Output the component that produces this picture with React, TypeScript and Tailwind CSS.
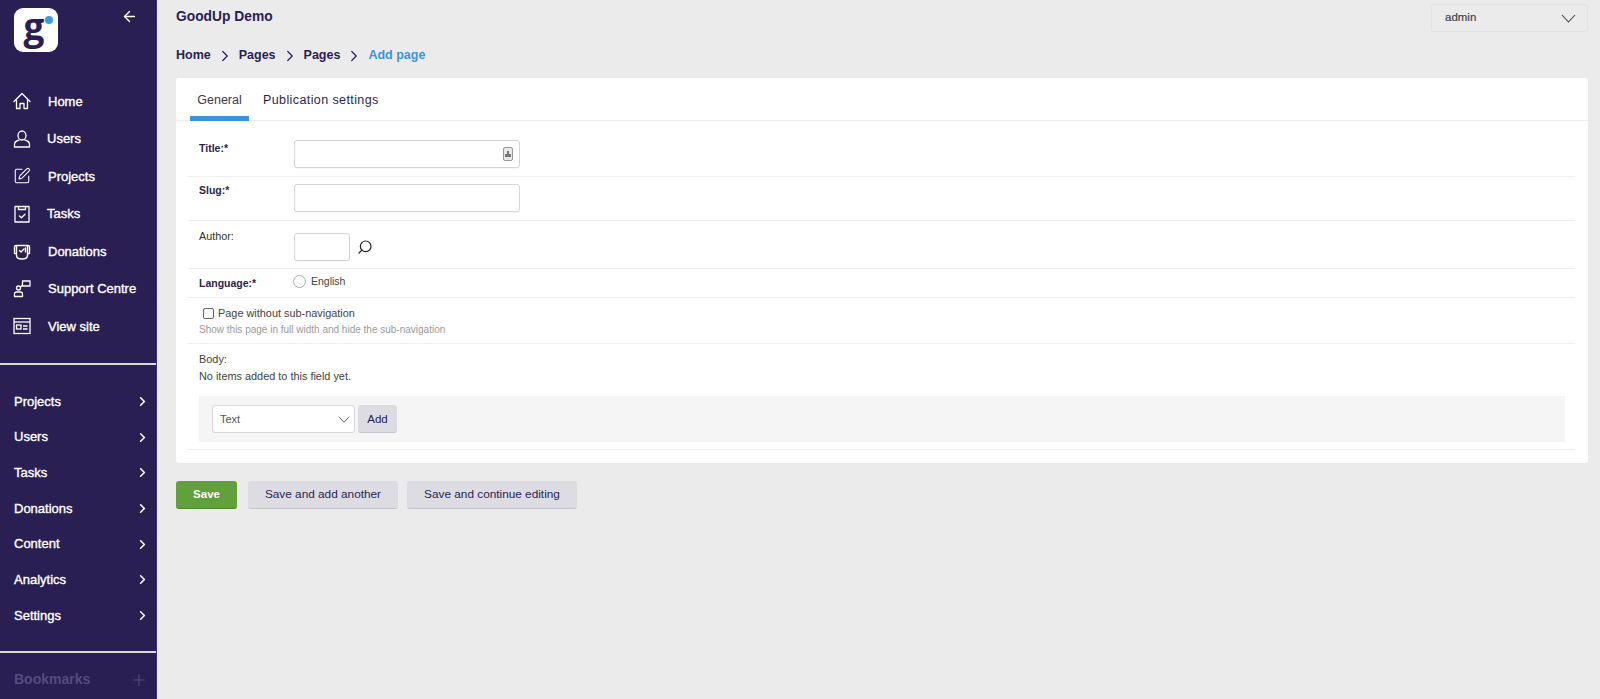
import React from 'react';
import { ArrowLeft, ChevronRight, Plus, Search, SquarePen } from 'lucide-react';

const WideChevron = ({ className }: { className?: string }) => (
  <svg width="15" height="9" viewBox="0 0 15 9" fill="none" stroke="currentColor" strokeWidth="1.1" className={className}>
    <path d="M1 1l6.500 7L14 1" />
  </svg>
);

const HomeIcon = () => (
  <svg width="18" height="18" viewBox="0 0 18 18" fill="none" stroke="currentColor" strokeWidth="1.3" strokeLinejoin="round" strokeLinecap="round">
    <path d="M1 9.500L9 1.500l8 8" />
    <path d="M3.500 8v8.500h3.500v-5h4v5h3.500V8" />
  </svg>
);

const UserIcon = () => (
  <svg width="18" height="18" viewBox="0 0 18 18" fill="none" stroke="currentColor" strokeWidth="1.3" strokeLinejoin="round">
    <ellipse cx="9" cy="5.500" rx="4" ry="4.500" />
    <path d="M6.500 10q-5 1-5 4.500v2.500h15v-2.500q0-3.500-5-4.500" />
  </svg>
);

const TasksIcon = () => (
  <svg width="18" height="18" viewBox="0 0 18 18" fill="none" stroke="currentColor" strokeWidth="1.3" strokeLinejoin="round" strokeLinecap="round">
    <rect x="2" y="1.500" width="14" height="15.500" />
    <path d="M5.500 1.500v3h7v-3" />
    <path d="M6.500 11l2 1.800 3.500-3.500" />
  </svg>
);

const DonationsIcon = () => (
  <svg width="18" height="18" viewBox="0 0 18 18" fill="none" stroke="currentColor" strokeWidth="1.4" strokeLinejoin="round" strokeLinecap="round">
    <path d="M3.500 11.500H1.500V5q0-1.500 1.500-1.500h12q1.500 0 1.500 1.500v6.500h-1.500" />
    <path d="M3.500 4v9.500q0 3.500 5.500 3.500t5.500-3.500V4" />
    <path d="M6.500 8.500l1.500 1.500 3-3" />
    <path d="M12.500 6v4" />
  </svg>
);

const SupportIcon = () => (
  <svg width="18" height="18" viewBox="0 0 18 18" fill="none" stroke="currentColor" strokeWidth="1.3" strokeLinejoin="round">
    <rect x="9.500" y="1" width="7.500" height="5" />
    <circle cx="5.500" cy="8" r="2" />
    <path d="M1.500 16.500v-2.500q0-2 2-2h4q2 0 2 2v2.500z" />
    <path d="M7.500 7l2-2" />
  </svg>
);

const ViewSiteIcon = () => (
  <svg width="18" height="18" viewBox="0 0 18 18" fill="none" stroke="currentColor" strokeWidth="1.3">
    <rect x="1" y="1.500" width="16" height="15" />
    <path d="M1 5h16" />
    <rect x="3.500" y="8" width="4.500" height="4" />
    <path d="M10 9h4.500M10 12h4.500" />
  </svg>
);

const primaryNav = [
  { label: 'Home', icon: <HomeIcon />, pad: 'pl-[48px]' },
  { label: 'Users', icon: <UserIcon />, pad: 'pl-[47px]' },
  { label: 'Projects', icon: <SquarePen size={18} strokeWidth={1.4} />, pad: 'pl-[48px]' },
  { label: 'Tasks', icon: <TasksIcon />, pad: 'pl-[47px]' },
  { label: 'Donations', icon: <DonationsIcon />, pad: 'pl-[48px]' },
  { label: 'Support Centre', icon: <SupportIcon />, pad: 'pl-[48px]' },
  { label: 'View site', icon: <ViewSiteIcon />, pad: 'pl-[48px]' },
];

const secondaryNav = ['Projects', 'Users', 'Tasks', 'Donations', 'Content', 'Analytics', 'Settings'];

function Sidebar() {
  return (
    <aside className="w-[157px] h-[699px] shrink-0 bg-[#291f52] text-white flex flex-col overflow-hidden border-r border-[#3a3170]">
      <div className="h-[82px] pt-2 pl-[14px] pr-[18px] flex items-start justify-between">
        <div className="relative w-[44px] h-[44px] rounded-[9px] bg-white flex items-center justify-center">
          <span className="font-['Open_Sans'] text-[37px] leading-none font-bold text-[#291f52] -mt-[9px] -ml-[4px]">g</span>
          <span className="absolute top-[8px] right-[5px] w-[8px] h-[8px] rounded-full bg-[#3d9be0]" />
        </div>
        <ArrowLeft size={17} strokeWidth={2} />
      </div>
      <nav className="flex flex-col">
        {primaryNav.map((item) => (
          <div key={item.label} className="relative h-[37.5px] flex items-center">
            <span className="absolute left-[13px] top-[10px]">{item.icon}</span>
            <span className={`${item.pad} pt-[1px] text-[13px] font-medium [-webkit-text-stroke:0.35px_white]`}>{item.label}</span>
          </div>
        ))}
      </nav>
      <div className="mt-[18px] h-[2px] shrink-0 bg-[#d8d8de]" />
      <nav className="pt-[19px] flex flex-col">
        {secondaryNav.map((label) => (
          <div key={label} className="h-[35.7px] pl-[14px] pr-[6px] flex items-center justify-between">
            <span className="text-[13px] font-medium [-webkit-text-stroke:0.35px_white]">{label}</span>
            <ChevronRight size={15} strokeWidth={2.6} />
          </div>
        ))}
      </nav>
      <div className="mt-[18px] h-[2px] shrink-0 bg-[#d8d8de]" />
      <div className="pt-[16px] pl-[14px] pr-[8px] flex items-center justify-between text-[#554c7c]">
        <span className="text-[14px] font-bold">Bookmarks</span>
        <Plus size={18} strokeWidth={1.6} />
      </div>
    </aside>
  );
}

function Row({ label, required, className, labelClass, children }: { label: string; required?: boolean; className: string; labelClass?: string; children: React.ReactNode }) {
  return (
    <div className={`flex border-b border-[#efefef] ml-[12px] mr-[13px] pl-[11px] ${className}`}>
      <label className={`w-[95px] shrink-0 leading-[14px] ${required ? 'text-[10.5px] font-bold' : 'text-[10.8px] text-[#333]'} ${labelClass ?? ''}`}>{label}</label>
      {children}
    </div>
  );
}

const inputClass = 'h-[28px] rounded-[3px] border border-[#d4d4d4] bg-white shadow-[0_1px_1px_rgba(0,0,0,0.04)]';

function PageForm() {
  return (
    <div className="bg-white rounded-[3px] h-[385px] text-[#291f52]">
      <div className="h-[43px] border-b border-[#ececec] pl-[14px] flex text-[12.5px]">
        <div className="w-[59px] h-[43px] flex justify-center pt-[13px] border-b-[5px] border-[#3a93de] text-[#3a3a4a]">General</div>
        <div className="pl-[14px] pt-[13px] tracking-[0.4px]">Publication settings</div>
      </div>
      <Row label="Title:*" required className="h-[56px] pt-[20px]">
        <div className={`relative w-[226px] ${inputClass} -mt-[1px]`}>
          <span className="absolute right-[6px] top-[6px] w-[10px] h-[14px] rounded-[2px] border-[1.5px] border-[#999] bg-[#e8e8e8] flex flex-col items-center justify-center">
            <span className="w-[2px] h-[3px] bg-[#777]" />
            <span className="w-[6px] h-[3px] bg-[#777]" />
          </span>
        </div>
      </Row>
      <Row label="Slug:*" required labelClass="mt-[6px]" className="h-[44px] items-start">
        <div className="pt-[7px]"><div className={`w-[226px] ${inputClass}`} /></div>
      </Row>
      <Row label="Author:" labelClass="-mt-[1px]" className="h-[48px] pt-[9px]">
        <div className={`w-[56px] ${inputClass} mt-[3px]`} />
        <Search size={16} strokeWidth={1.8} className="mt-[9px] ml-[7px] text-[#222] -scale-x-100" />
      </Row>
      <Row label="Language:*" required className="h-[29px] items-center">
        <div className="-ml-[1px] -mt-[3px] flex items-center gap-[5px] text-[10.5px] text-[#444]">
          <span className="w-[13px] h-[13px] rounded-full border border-[#aaa]" />
          English
        </div>
      </Row>
      <div className="h-[46px] border-b border-[#efefef] ml-[12px] mr-[13px] pl-[11px] pt-[8px]">
        <div className="flex items-center gap-[4px] pl-[4px] text-[10.9px] leading-[14px] text-[#444]">
          <span className="w-[11px] h-[11px] rounded-[2px] border-[1.5px] border-[#666]" />
          Page without sub-navigation
        </div>
        <p className="mt-[3px] text-[10px] leading-[13px] text-[#9a9a9a]">Show this page in full width and hide the sub-navigation</p>
      </div>
      <div className="h-[106px] border-b border-[#efefef] ml-[12px] mr-[13px] pl-[11px] pt-[8px] text-[10.9px] leading-[14px] text-[#444]">
        <p>Body:</p>
        <p className="mt-[3px]">No items added to this field yet.</p>
        <div className="mt-[13px] h-[46px] mr-[10px] bg-[#f5f5f5] pl-[13px] pt-[9px] flex gap-[3px]">
          <div className="w-[143px] h-[28px] rounded-[3px] border border-[#d8d8d8] bg-white pl-[7px] pr-[4px] flex items-center justify-between text-[11px] text-[#555]">
            Text
            <WideChevron className="text-[#555] w-[12px]" />
          </div>
          <button className="w-[39px] h-[28px] rounded-[3px] bg-[#dcdce2] border-b border-[#c4c4cc] text-[11.5px] text-[#291f52]">Add</button>
        </div>
      </div>
    </div>
  );
}

export default function App() {
  return (
    <div className="w-[1600px] h-[699px] overflow-hidden flex bg-[#ebebeb] font-['Liberation_Sans',Arial,sans-serif]">
      <Sidebar />
      <main className="flex-1 pl-[19px] pr-[12px] text-[#291f52]">
        <header className="h-[33px] flex justify-between items-start">
          <span className="mt-[9px] text-[13.8px] leading-[16px] font-bold">GoodUp Demo</span>
          <div className="w-[157px] h-[28px] mt-[4px] rounded-[3px] border border-[#e2e2e2] pl-[13px] pr-[11px] flex items-center justify-between text-[11.5px] text-[#444] [-webkit-text-stroke:0.2px_#444]">
            admin
            <WideChevron className="text-[#444]" />
          </div>
        </header>
        <div className="h-[45px] pt-[14px] flex text-[12.5px] leading-[16px] font-bold">
          <span>Home</span>
          <ChevronRight size={18} strokeWidth={1.6} className="mx-[5px]" />
          <span>Pages</span>
          <ChevronRight size={18} strokeWidth={1.6} className="mx-[5px]" />
          <span>Pages</span>
          <ChevronRight size={18} strokeWidth={1.6} className="mx-[5px]" />
          <span className="text-[#3a93de]">Add page</span>
        </div>
        <PageForm />
        <div className="mt-[18px] flex text-[11.8px] text-[#291f52]">
          <button className="w-[61px] h-[28px] rounded-[3px] bg-[#61a03c] border-b border-[#4b8a2a] text-white font-bold text-[11.5px]">Save</button>
          <button className="ml-[11px] w-[150px] h-[28px] rounded-[3px] bg-[#dcdce2] border-b border-[#c4c4cc]">Save and add another</button>
          <button className="ml-[9px] w-[170px] h-[28px] rounded-[3px] bg-[#dcdce2] border-b border-[#c4c4cc]">Save and continue editing</button>
        </div>
      </main>
    </div>
  );
}
